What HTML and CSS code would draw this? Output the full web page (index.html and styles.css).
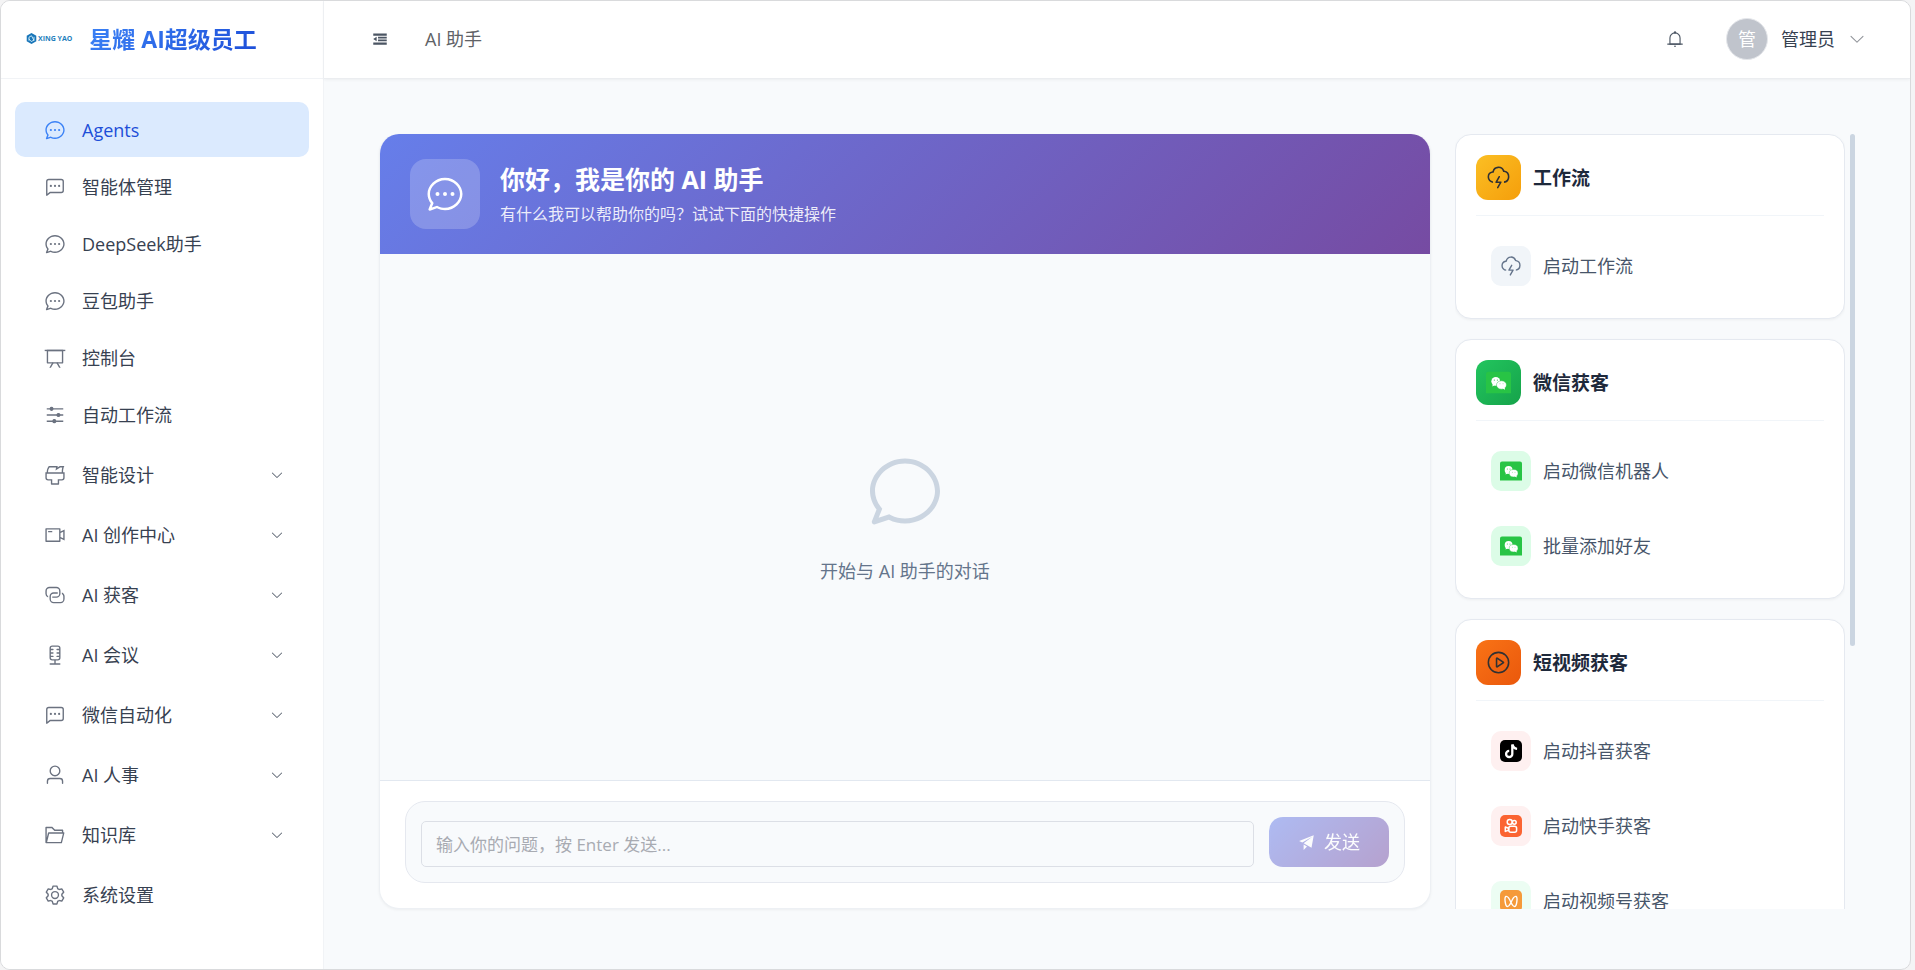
FILE: index.html
```html
<!DOCTYPE html>
<html lang="zh-CN">
<head>
<meta charset="utf-8">
<title>AI 助手</title>
<link rel="stylesheet" href="styles.css">
</head>
<body>
<svg class="sprite" aria-hidden="true">
  <symbol id="chat-round" viewBox="0 0 1024 1024"><path d="m174.72 855.68 135.296-45.12 23.68 11.84C388.096 849.536 448.576 864 512 864c211.84 0 384-166.784 384-352S723.84 160 512 160 128 326.784 128 512c0 69.12 24.96 139.264 70.848 199.232l22.08 28.8-46.272 115.584zm-45.248 82.56A32 32 0 0 1 89.6 896l58.368-145.92C94.72 680.32 64 596.864 64 512 64 299.904 256 96 512 96s448 203.904 448 416-192 416-448 416a461.056 461.056 0 0 1-206.912-48.384l-175.616 58.56z"/></symbol>
  <symbol id="chat-dot-round" viewBox="0 0 1024 1024"><use href="#chat-round"/><circle cx="320" cy="512" r="51"/><circle cx="512" cy="512" r="51"/><circle cx="704" cy="512" r="51"/></symbol>
  <symbol id="chat-dot-square" viewBox="0 0 1024 1024"><path d="M273.536 736H800a64 64 0 0 0 64-64V256a64 64 0 0 0-64-64H224a64 64 0 0 0-64 64v570.88L273.536 736zM296 800 147.968 918.4A32 32 0 0 1 96 893.44V256a128 128 0 0 1 128-128h576a128 128 0 0 1 128 128v416a128 128 0 0 1-128 128H296z"/><circle cx="320" cy="460" r="51"/><circle cx="512" cy="460" r="51"/><circle cx="704" cy="460" r="51"/></symbol>
  <symbol id="board" viewBox="0 0 1024 1024"><path d="M32 128h960v64H32z"/><path d="M192 192v512h640V192H192zm-64-64h768v608a32 32 0 0 1-32 32H160a32 32 0 0 1-32-32V128z"/><path d="M322.176 960H248.32l144.64-250.56 55.424 32L322.176 960zm453.888 0h-73.856L576 741.44l55.424-32L776.064 960z"/></symbol>
  <symbol id="operation" viewBox="0 0 1024 1024"><path d="M389.44 768a96.064 96.064 0 0 1 181.12 0H896v64H570.56a96.064 96.064 0 0 1-181.12 0H128v-64h261.44zm192-288a96.064 96.064 0 0 1 181.12 0H896v64H762.56a96.064 96.064 0 0 1-181.12 0H128v-64h453.44zm-320-288a96.064 96.064 0 0 1 181.12 0H896v64H442.56a96.064 96.064 0 0 1-181.12 0H128v-64h133.44z"/></symbol>
  <symbol id="brush" viewBox="0 0 1024 1024"><path d="M896 448H128v192a64 64 0 0 0 64 64h192v192h256V704h192a64 64 0 0 0 64-64V448zm-770.752-64c0-47.552 5.248-90.24 15.552-128 14.72-54.016 42.496-107.392 83.2-160h417.28l-15.36 70.336L736 96h211.2c-24.832 42.88-41.92 96.256-51.2 160a663.872 663.872 0 0 0-6.144 128H960v256a128 128 0 0 1-128 128H704v160a32 32 0 0 1-32 32H352a32 32 0 0 1-32-32V768H192A128 128 0 0 1 64 640V384h61.248zm64 0h636.544c-2.048-45.824.256-91.584 6.848-137.216 4.48-30.848 10.688-59.776 18.688-86.784h-96.64l-221.12 141.248L561.92 160H256.512c-25.856 37.888-43.776 75.456-53.952 112.832-8.768 32.064-13.248 69.12-13.312 111.168z"/></symbol>
  <symbol id="video-camera" viewBox="0 0 1024 1024"><path d="M704 768V256H128v512h576zm64-416 192-96v512l-192-96v128a32 32 0 0 1-32 32H96a32 32 0 0 1-32-32V224a32 32 0 0 1 32-32h640a32 32 0 0 1 32 32v128zm0 71.552v176.896l128 64V359.552l-128 64zM192 320h192v64H192v-64z"/></symbol>
  <symbol id="connection" viewBox="0 0 1024 1024"><path d="M640 384v64H448a128 128 0 0 0-128 128v128a128 128 0 0 0 128 128h320a128 128 0 0 0 128-128V576a128 128 0 0 0-64-110.848V394.88c74.56 26.368 128 97.472 128 181.056v128a192 192 0 0 1-192 192H448a192 192 0 0 1-192-192V576a192 192 0 0 1 192-192h192z"/><path d="M384 640v-64h192a128 128 0 0 0 128-128V320a128 128 0 0 0-128-128H256a128 128 0 0 0-128 128v128a128 128 0 0 0 64 110.848v70.272A192.064 192.064 0 0 1 64 448V320a192 192 0 0 1 192-192h320a192 192 0 0 1 192 192v128a192 192 0 0 1-192 192H384z"/></symbol>
  <symbol id="microphone" viewBox="0 0 1024 1024"><path d="M480 704h160a64 64 0 0 0 64-64v-32h-96a32 32 0 0 1 0-64h96v-96h-96a32 32 0 0 1 0-64h96v-96h-96a32 32 0 0 1 0-64h96v-32a64 64 0 0 0-64-64H384a64 64 0 0 0-64 64v32h96a32 32 0 0 1 0 64h-96v96h96a32 32 0 0 1 0 64h-96v96h96a32 32 0 0 1 0 64h-96v32a64 64 0 0 0 64 64h96zm64 64v128h192a32 32 0 1 1 0 64H288a32 32 0 1 1 0-64h192V768h-96a128 128 0 0 1-128-128V192A128 128 0 0 1 384 64h256a128 128 0 0 1 128 128v448a128 128 0 0 1-128 128h-96z"/></symbol>
  <symbol id="user" viewBox="0 0 1024 1024"><path d="M512 512a192 192 0 1 0 0-384 192 192 0 0 0 0 384zm0 64a256 256 0 1 1 0-512 256 256 0 0 1 0 512zm320 320v-96a96 96 0 0 0-96-96H288a96 96 0 0 0-96 96v96a32 32 0 1 1-64 0v-96a160 160 0 0 1 160-160h448a160 160 0 0 1 160 160v96a32 32 0 1 1-64 0z"/></symbol>
  <symbol id="folder" viewBox="0 0 1024 1024"><path d="M878.08 448H241.92l-96 384h636.16l96-384zM832 384v-64H485.76L357.504 192H128v448l57.92-231.744A32 32 0 0 1 216.96 384H832zm-24.96 512H96a32 32 0 0 1-32-32V160a32 32 0 0 1 32-32h287.872l128.384 128H864a32 32 0 0 1 32 32v96h23.04a32 32 0 0 1 31.04 39.744l-112 448A32 32 0 0 1 807.04 896z"/></symbol>
  <symbol id="setting" viewBox="0 0 1024 1024"><path d="M600.704 64a32 32 0 0 1 30.464 22.208l35.2 109.376c14.784 7.232 28.928 15.36 42.432 24.512l112.384-24.192a32 32 0 0 1 34.432 15.36L944.32 364.8a32 32 0 0 1-4.032 37.504l-77.12 85.12a357.12 357.12 0 0 1 0 49.024l77.12 85.248a32 32 0 0 1 4.032 37.504l-88.704 153.6a32 32 0 0 1-34.432 15.296L708.8 803.904c-13.44 9.088-27.648 17.28-42.368 24.512l-35.264 109.376A32 32 0 0 1 600.704 960H423.296a32 32 0 0 1-30.464-22.208L357.696 828.48a351.616 351.616 0 0 1-42.56-24.64l-112.32 24.256a32 32 0 0 1-34.432-15.36L79.68 659.2a32 32 0 0 1 4.032-37.504l77.12-85.248a357.12 357.12 0 0 1 0-48.896l-77.12-85.248A32 32 0 0 1 79.68 364.8l88.704-153.6a32 32 0 0 1 34.432-15.296l112.32 24.256c13.568-9.152 27.776-17.408 42.56-24.64l35.2-109.312A32 32 0 0 1 423.232 64H600.64zm-23.424 64H446.72l-36.352 113.088-24.512 11.968a294.113 294.113 0 0 0-34.816 20.096l-22.656 15.36-116.224-25.088-65.28 113.152 79.68 88.192-1.92 27.136a293.12 293.12 0 0 0 0 40.192l1.92 27.136-79.808 88.192 65.344 113.152 116.224-25.024 22.656 15.296a294.113 294.113 0 0 0 34.816 20.096l24.512 11.968L446.72 896h130.688l36.48-113.152 24.448-11.904a288.282 288.282 0 0 0 34.752-20.096l22.592-15.296 116.288 25.024 65.28-113.152-79.744-88.192 1.92-27.136a293.12 293.12 0 0 0 0-40.256l-1.92-27.136 79.808-88.128-65.344-113.152-116.288 24.96-22.592-15.232a287.616 287.616 0 0 0-34.752-20.096l-24.448-11.904L577.344 128zM512 320a192 192 0 1 1 0 384 192 192 0 0 1 0-384zm0 64a128 128 0 1 0 0 256 128 128 0 0 0 0-256z"/></symbol>
  <symbol id="arrow-down" viewBox="0 0 1024 1024"><path d="M831.872 340.864 512 652.672 192.128 340.864a30.592 30.592 0 0 0-42.752 0 29.12 29.12 0 0 0 0 41.6L489.664 714.24a32 32 0 0 0 44.672 0l340.288-331.712a29.12 29.12 0 0 0 0-41.728 30.592 30.592 0 0 0-42.752 0z"/></symbol>
  <symbol id="fold" viewBox="0 0 1024 1024"><path d="M896 192H128v128h768V192zm0 190H400v96h496v-96zm0 164H400v96h496v-96zm0 158H128v128h768V704zM320 384 128 512l192 128V384z"/></symbol>
  <symbol id="bell" viewBox="0 0 1024 1024"><path d="M512 64a64 64 0 0 1 64 64v64H448v-64a64 64 0 0 1 64-64z"/><path d="M256 768h512V448a256 256 0 1 0-512 0v320zm256-640a320 320 0 0 1 320 320v384H192V448a320 320 0 0 1 320-320z"/><path d="M96 768h832q32 0 32 32t-32 32H96q-32 0-32-32t32-32zm352 128h128a64 64 0 0 1-128 0z"/></symbol>
  <symbol id="lightning" viewBox="0 0 1024 1024"><path d="M288 671.36v64.128A239.808 239.808 0 0 1 63.744 496.192a240.32 240.32 0 0 1 199.488-236.8 256.128 256.128 0 0 1 487.872-30.976A256.064 256.064 0 0 1 736 734.016v-64.768a192 192 0 0 0 3.328-377.92l-35.2-6.592-12.8-33.408a192.064 192.064 0 0 0-365.952 23.232l-9.92 40.896-41.472 7.04a176.32 176.32 0 0 0-146.24 173.568c0 91.968 70.464 167.36 160.256 175.232z"/><path d="M416 736a32 32 0 0 1-27.776-47.872l128-224a32 32 0 1 1 55.552 31.744L471.168 672H608a32 32 0 0 1 27.776 47.872l-128 224a32 32 0 1 1-55.68-31.744L552.96 736H416z"/></symbol>
  <symbol id="video-play" viewBox="0 0 1024 1024"><path d="M512 64a448 448 0 1 1 0 896 448 448 0 0 1 0-896zm0 832a384 384 0 0 0 0-768 384 384 0 0 0 0 768zm-48-247.616L668.608 512 464 375.616v272.768zm10.624-342.656 249.472 166.336a48 48 0 0 1 0 79.872L474.624 718.272A48 48 0 0 1 400 678.336V345.6a48 48 0 0 1 74.624-39.936z"/></symbol>
  <symbol id="promotion" viewBox="0 0 1024 1024"><path d="m64 448 832-320-128 704-446.08-243.328L832 192 242.816 545.536 64 448zm256 512V657.024L512 768 320 960z"/></symbol>
  <symbol id="wechat" viewBox="0 0 22 22">
    <path fill="#28c445" d="M0 3.500a2 2 0 0 1 2-2h18a2 2 0 0 1 2 2v17H0z"/>
    <circle cx="8.600" cy="10" r="3.900" fill="#fff"/>
    <path fill="#fff" d="m6 12.500-.5 2 2.200-1z"/>
    <ellipse cx="13.600" cy="13.200" rx="4.400" ry="3.700" fill="#fff" stroke="#28c445" stroke-width=".4"/>
    <path fill="#fff" d="m14.600 16.300 2.200 1.100-.4-2z"/>
    <g fill="#28c445"><circle cx="7.300" cy="8.900" r=".5"/><circle cx="10" cy="8.900" r=".5"/><circle cx="12.300" cy="12.200" r=".4"/><circle cx="15" cy="12.200" r=".4"/></g>
  </symbol>
  <symbol id="douyin" viewBox="0 0 22 22"><rect width="22" height="22" rx="5" fill="#000"/><path d="M12.300 4.500v9.400a3.100 3.100 0 1 1-3.100-3.100" fill="none" stroke="#fff" stroke-width="2.300"/><path d="M12.600 4.500c.3 2.600 2 4.100 4.500 4.300" fill="none" stroke="#fff" stroke-width="2.300"/></symbol>
  <symbol id="kuaishou" viewBox="0 0 22 22"><rect width="22" height="22" rx="5" fill="#fb6432"/><g fill="none" stroke="#fff" stroke-width="1.500"><circle cx="9.700" cy="7" r="2.500"/><circle cx="14.300" cy="7.300" r="1.900"/><rect x="8.800" y="11.300" width="7.800" height="5.900" rx="2"/><path d="M8.500 13.300 5.300 12v4.400l3.200-1.200z" stroke-linejoin="round"/></g></symbol>
  <symbol id="channels" viewBox="0 0 22 22"><rect width="22" height="22" rx="5" fill="#f59a3a"/><path d="M11 12.500C9.300 8.500 7.400 6 5.900 6.500c-1.800.8-.6 9.700 1.300 10 1.400.2 2.600-1.600 3.800-4 1.200 2.400 2.400 4.200 3.800 4 1.900-.3 3.100-9.200 1.300-10-1.500-.5-3.400 2-5.100 6z" fill="none" stroke="#fff" stroke-width="1.400"/></symbol>
</svg>

<div class="app">
  <aside class="sidebar">
    <a class="brand" href="#">
      <span class="brand-mark">
        <svg class="brand-hex" viewBox="0 0 20 20"><path d="M10 0 18.700 5v10L10 20 1.300 15V5z" fill="#1976b9"/><path d="M5.500 14V7.500L10 5l4.500 8.500V7M5 10.500l4.500 5 5-2.500" fill="none" stroke="#d9f1fb" stroke-width="1.600"/></svg>
        <span class="brand-mini">XING YAO</span>
      </span>
      <span class="brand-name">星耀 AI超级员工</span>
    </a>
    <nav class="menu">
      <a class="menu-item active" href="#"><svg class="menu-icon"><use href="#chat-dot-round"/></svg><span>Agents</span></a>
      <a class="menu-item" href="#"><svg class="menu-icon"><use href="#chat-dot-square"/></svg><span>智能体管理</span></a>
      <a class="menu-item" href="#"><svg class="menu-icon"><use href="#chat-dot-round"/></svg><span>DeepSeek助手</span></a>
      <a class="menu-item" href="#"><svg class="menu-icon"><use href="#chat-dot-round"/></svg><span>豆包助手</span></a>
      <a class="menu-item" href="#"><svg class="menu-icon"><use href="#board"/></svg><span>控制台</span></a>
      <a class="menu-item" href="#"><svg class="menu-icon"><use href="#operation"/></svg><span>自动工作流</span></a>
      <div class="menu-groups">
        <button class="menu-item" type="button"><svg class="menu-icon"><use href="#brush"/></svg><span>智能设计</span><svg class="menu-arrow"><use href="#arrow-down"/></svg></button>
        <button class="menu-item" type="button"><svg class="menu-icon"><use href="#video-camera"/></svg><span>AI 创作中心</span><svg class="menu-arrow"><use href="#arrow-down"/></svg></button>
        <button class="menu-item" type="button"><svg class="menu-icon"><use href="#connection"/></svg><span>AI 获客</span><svg class="menu-arrow"><use href="#arrow-down"/></svg></button>
        <button class="menu-item" type="button"><svg class="menu-icon"><use href="#microphone"/></svg><span>AI 会议</span><svg class="menu-arrow"><use href="#arrow-down"/></svg></button>
        <button class="menu-item" type="button"><svg class="menu-icon"><use href="#chat-dot-square"/></svg><span>微信自动化</span><svg class="menu-arrow"><use href="#arrow-down"/></svg></button>
        <button class="menu-item" type="button"><svg class="menu-icon"><use href="#user"/></svg><span>AI 人事</span><svg class="menu-arrow"><use href="#arrow-down"/></svg></button>
        <button class="menu-item" type="button"><svg class="menu-icon"><use href="#folder"/></svg><span>知识库</span><svg class="menu-arrow"><use href="#arrow-down"/></svg></button>
        <a class="menu-item" href="#"><svg class="menu-icon"><use href="#setting"/></svg><span>系统设置</span></a>
      </div>
    </nav>
  </aside>

  <div class="workspace">
    <header class="topbar">
      <button class="icon-button" type="button" aria-label="折叠菜单"><svg class="icon-18"><use href="#fold"/></svg></button>
      <span class="crumb">AI 助手</span>
      <button class="icon-button bell" type="button" aria-label="通知"><svg class="icon-18"><use href="#bell"/></svg></button>
      <button class="account" type="button">
        <span class="avatar">管</span>
        <span>管理员</span>
        <svg class="icon-18 account-arrow"><use href="#arrow-down"/></svg>
      </button>
    </header>

    <main class="content">
      <section class="chat">
        <div class="banner">
          <span class="banner-icon"><svg><use href="#chat-dot-round"/></svg></span>
          <div class="banner-text">
            <h1>你好，我是你的 AI 助手</h1>
            <p>有什么我可以帮助你的吗？试试下面的快捷操作</p>
          </div>
        </div>
        <div class="empty">
          <svg><use href="#chat-round"/></svg>
          <p>开始与 AI 助手的对话</p>
        </div>
        <div class="composer">
          <form class="composer-box">
            <input class="composer-input" type="text" aria-label="输入你的问题" placeholder="输入你的问题，按 Enter 发送...">
            <button class="send" type="button" disabled><svg><use href="#promotion"/></svg><span>发送</span></button>
          </form>
        </div>
      </section>

      <aside class="tools">
        <div class="tool-list">
          <section class="card">
            <h2 class="card-head"><span class="card-icon amber"><svg><use href="#lightning"/></svg></span>工作流</h2>
            <div class="actions">
              <button class="action" type="button"><span class="action-icon slate"><svg><use href="#lightning"/></svg></span>启动工作流</button>
            </div>
          </section>
          <section class="card">
            <h2 class="card-head"><span class="card-icon green"><svg><use href="#wechat"/></svg></span>微信获客</h2>
            <div class="actions">
              <button class="action" type="button"><span class="action-icon mint"><svg><use href="#wechat"/></svg></span>启动微信机器人</button>
              <button class="action" type="button"><span class="action-icon mint"><svg><use href="#wechat"/></svg></span>批量添加好友</button>
            </div>
          </section>
          <section class="card">
            <h2 class="card-head"><span class="card-icon orange"><svg><use href="#video-play"/></svg></span>短视频获客</h2>
            <div class="actions">
              <button class="action" type="button"><span class="action-icon rose"><svg><use href="#douyin"/></svg></span>启动抖音获客</button>
              <button class="action" type="button"><span class="action-icon rose"><svg><use href="#kuaishou"/></svg></span>启动快手获客</button>
              <button class="action" type="button"><span class="action-icon pale-mint"><svg><use href="#channels"/></svg></span>启动视频号获客</button>
            </div>
          </section>
        </div>
        <div class="scroll-track"><div class="scroll-thumb"></div></div>
      </aside>
    </main>
  </div>
</div>
</body>
</html>
```

FILE: styles.css
```css
* {
  box-sizing: border-box;
}

body {
  margin: 0;
  padding-right: 4px;
  background: #f4f4f5;
  color: #303133;
  font-family: "Open Sans", "Noto Sans CJK SC", sans-serif;
  font-size: 18px;
  line-height: 24px;
}

h1, h2, p {
  margin: 0;
}

a {
  color: inherit;
  text-decoration: none;
}

button, input {
  margin: 0;
  font: inherit;
}

button {
  padding: 0;
  border: 0;
  background: none;
  color: inherit;
  text-align: left;
  cursor: pointer;
}

svg {
  display: block;
  fill: currentColor;
}

.sprite {
  position: absolute;
  width: 0;
  height: 0;
}

.app {
  display: flex;
  height: 100vh;
  overflow: hidden;
  border: 1px solid #d9dadc;
  border-radius: 10px;
  background: #f8fafc;
}

/* Sidebar */

.sidebar {
  flex: none;
  display: flex;
  flex-direction: column;
  width: 323px;
  border-right: 1px solid #f1f3f6;
  background: #fff;
}

.brand {
  flex: none;
  display: flex;
  align-items: center;
  gap: 17px;
  height: 78px;
  padding: 0 0 2px 25px;
  border-bottom: 1px solid #f1f3f6;
}

.brand-mark {
  display: flex;
  align-items: center;
  gap: 1px;
}

.brand-hex {
  width: 11px;
  height: 11px;
}

.brand-mini {
  color: #1f7fbd;
  font-size: 7px;
  font-weight: 700;
  line-height: 10px;
}

.brand-name {
  background: linear-gradient(135deg, #3b82f6, #1d4ed8);
  background-clip: text;
  -webkit-background-clip: text;
  color: transparent;
  font-size: 23px;
  font-weight: 700;
  line-height: 32px;
}

.menu {
  display: flex;
  flex-direction: column;
  gap: 2px;
  padding: 23px 14px;
}

.menu-groups {
  display: flex;
  flex-direction: column;
  gap: 5px;
  padding-top: 3px;
}

.menu-item {
  display: flex;
  align-items: center;
  gap: 16px;
  height: 55px;
  padding: 0 25px 0 29px;
  border-radius: 10px;
  color: #374151;
}

.menu-item.active {
  background: #dbeafe;
  color: #1d4ed8;
}

.menu-icon {
  width: 22px;
  height: 22px;
  color: #6b7280;
}

.active .menu-icon {
  color: #3b82f6;
}

.menu-arrow {
  width: 14px;
  height: 14px;
  margin-left: auto;
  color: #4b5563;
}

/* Top bar */

.workspace {
  flex: 1;
  display: flex;
  flex-direction: column;
  min-width: 0;
}

.topbar {
  flex: none;
  display: flex;
  align-items: center;
  height: 78px;
  padding: 0 44px 2px 47px;
  border-bottom: 1px solid #ebedf0;
  background: #fff;
  box-shadow: 0 1px 3px rgba(0, 0, 0, 0.05);
}

.icon-button {
  color: #4b5563;
}

.icon-18 {
  width: 18px;
  height: 18px;
}

.crumb {
  margin-left: 36px;
  color: #606266;
}

.bell {
  margin-left: auto;
}

.account {
  display: flex;
  align-items: center;
  gap: 13px;
  margin-left: 42px;
  color: #374151;
}

.avatar {
  display: grid;
  place-items: center;
  width: 42px;
  height: 42px;
  border: 1px solid #e5e7eb;
  border-radius: 50%;
  background: #c0c4cc;
  color: #fff;
}

.account-arrow {
  color: #909399;
}

/* Content */

.content {
  flex: 1;
  display: flex;
  gap: 24px;
  min-height: 0;
  padding: 55px 55px 60px;
}

.chat {
  flex: 1;
  display: flex;
  flex-direction: column;
  min-width: 0;
  overflow: hidden;
  border: 1px solid #edf0f4;
  border-top: 0;
  border-radius: 20px;
  background: #fff;
  box-shadow: 0 1px 3px rgba(0, 0, 0, 0.05);
}

.banner {
  display: flex;
  align-items: center;
  gap: 20px;
  padding: 25px 30px;
  background: linear-gradient(135deg, #667eea 0%, #764ba2 100%);
  color: #fff;
}

.banner-icon {
  display: grid;
  place-items: center;
  width: 70px;
  height: 70px;
  border-radius: 16px;
  background: rgba(255, 255, 255, 0.2);
}

.banner-icon svg {
  width: 40px;
  height: 40px;
}

.banner-text h1 {
  font-size: 25px;
  font-weight: 700;
  line-height: 40px;
}

.banner-text p {
  color: rgba(255, 255, 255, 0.88);
  font-size: 16px;
  line-height: 30px;
}

.empty {
  flex: 1;
  display: flex;
  flex-direction: column;
  align-items: center;
  justify-content: center;
  gap: 28px;
  background: #f8fafc;
  color: #64748b;
}

.empty svg {
  width: 80px;
  height: 80px;
  color: #cbd5e1;
}

.composer {
  padding: 20px 25px 25px;
  border-top: 1px solid #e2e8f0;
}

.composer-box {
  display: flex;
  align-items: flex-end;
  gap: 15px;
  padding: 15px;
  border: 1px solid #e5e8ef;
  border-radius: 20px;
  background: #f8fafc;
}

.composer-input {
  flex: 1;
  min-width: 0;
  height: 46px;
  padding: 0 14px;
  border: 1px solid #dcdfe6;
  border-radius: 5px;
  outline: 0;
  background: #f8fafc;
  color: #303133;
  font-size: 17px;
}

.composer-input::placeholder {
  color: #a8abb2;
}

.send {
  display: flex;
  align-items: center;
  justify-content: center;
  gap: 8px;
  width: 120px;
  height: 50px;
  border-radius: 14px;
  background: linear-gradient(135deg, #667eea 0%, #764ba2 100%);
  color: #fff;
  opacity: 0.5;
}

.send svg {
  width: 18px;
  height: 18px;
}

/* Quick actions */

.tools {
  flex: none;
  display: flex;
  gap: 5px;
  width: 400px;
}

.tool-list {
  flex: 1;
  display: flex;
  flex-direction: column;
  gap: 20px;
  overflow: hidden;
}

.card {
  flex: none;
  padding: 20px 20px 17px;
  border: 1px solid #e5e9f0;
  border-radius: 16px;
  background: #fff;
  box-shadow: 0 1px 3px rgba(0, 0, 0, 0.05);
}

.card-head {
  display: flex;
  align-items: center;
  gap: 12px;
  padding-bottom: 15px;
  border-bottom: 1px solid #f1f5f9;
  color: #1e293b;
  font-size: 19px;
  font-weight: 700;
}

.card-icon {
  display: grid;
  place-items: center;
  width: 45px;
  height: 45px;
  border-radius: 12px;
  color: #303133;
}

.card-icon svg {
  width: 25px;
  height: 25px;
}

.amber {
  background: linear-gradient(135deg, #fbbf24, #f59e0b);
}

.green {
  background: linear-gradient(135deg, #22c55e, #16a34a);
}

.orange {
  background: linear-gradient(135deg, #f97316, #ea580c);
}

.actions {
  display: flex;
  flex-direction: column;
  gap: 5px;
  padding-top: 15px;
}

.action {
  display: flex;
  align-items: center;
  gap: 12px;
  height: 70px;
  padding: 0 15px;
  color: #475569;
}

.action-icon {
  display: grid;
  place-items: center;
  width: 40px;
  height: 40px;
  border-radius: 10px;
}

.action-icon svg {
  width: 22px;
  height: 22px;
}

.slate {
  background: #f1f5f9;
  color: #64748b;
}

.mint {
  background: #dcfce7;
}

.rose {
  background: #fef0f0;
}

.pale-mint {
  background: #ecfdf3;
}

.scroll-track {
  width: 5px;
}

.scroll-thumb {
  height: 66%;
  border-radius: 3px;
  background: #cbd5e1;
}
```
